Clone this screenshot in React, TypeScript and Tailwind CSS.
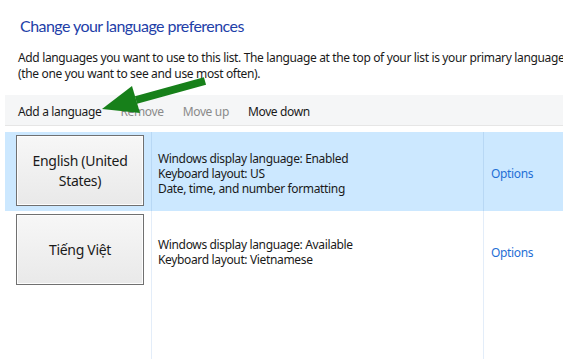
export default function App() {
  return (
    <div className="relative w-[563px] h-[359px] overflow-hidden bg-white font-['Noto_Sans',sans-serif] text-[#1a1a1a] flex flex-col">
      <h1 className="pt-[15px] pl-[20px] text-[16px] leading-[22px] text-[#1e40a8] whitespace-nowrap font-['Lato',sans-serif] tracking-[-0.55px]">
        Change your language preferences
      </h1>
      <div className="mt-[13px] pl-[18px] text-[12px] leading-[16px] tracking-[-0.35px] whitespace-nowrap">
        <p>Add languages you want to use to this list. The language at the top of your list is your primary language</p>
        <p>(the one you want to see and use most often).</p>
      </div>

      <div className="mt-[13px] ml-[5px] h-[31px] shrink-0 bg-[#f5f6f7] border-b border-[#e6e6e6] flex items-center gap-[19px] pl-[13px] pt-[3px] text-[12px] tracking-[-0.35px] whitespace-nowrap">
        <span>Add a language</span>
        <span className="text-[#8a8a8a]">Remove</span>
        <span className="text-[#8a8a8a]">Move up</span>
        <span>Move down</span>
      </div>

      <div className="mt-[6px] ml-[5px] flex-1 flex flex-col text-[12px] leading-[15px] tracking-[-0.35px]">
        <LanguageRow
          name="English (United States)"
          lines={['Windows display language: Enabled', 'Keyboard layout: US', 'Date, time, and number formatting']}
          selected
        />
        <LanguageRow
          name="Tiếng Việt"
          lines={['Windows display language: Available', 'Keyboard layout: Vietnamese']}
        />
        <div className="flex-1 flex">
          <div className="w-[146px]" />
          <div className="w-[332px] border-l border-[#e3edf9]" />
          <div className="flex-1 border-l border-[#e3edf9]" />
        </div>
      </div>

      <svg className="absolute left-0 top-0" width="563" height="359" viewBox="0 0 563 359">
        <line x1="136" y1="100" x2="205" y2="81" stroke="#17801a" strokeWidth="8" />
        <polygon points="102,109 132,86 140,113" fill="#17801a" />
      </svg>
    </div>
  );
}

function LanguageRow({ name, lines, selected }: { name: string; lines: string[]; selected?: boolean }) {
  const divider = selected ? 'border-[#b8d8f5]' : 'border-[#e3edf9]';
  return (
    <div className={`h-[79px] shrink-0 flex ${selected ? 'bg-[#cce8ff]' : ''}`}>
      <div className="w-[146px] pl-[11px] pt-[3px]">
        <div className="w-[128px] h-[71px] border border-[#707070] shadow-[inset_0_0_0_1px_#fdfdfd] bg-gradient-to-b from-[#f7f7f7] to-[#e9e9e9] flex items-center justify-center text-center text-[14px] leading-[20px] tracking-[-0.3px] px-[6px]">
          {name}
        </div>
      </div>
      <div className={`w-[332px] border-l ${divider} pl-[6px] pt-[3px] flex flex-col justify-center whitespace-nowrap`}>
        {lines.map((l) => (
          <span key={l}>{l}</span>
        ))}
      </div>
      <div className={`flex-1 border-l ${divider} pl-[7px] pt-[3px] flex items-center text-[#1f6fd6]`}>Options</div>
    </div>
  );
}
